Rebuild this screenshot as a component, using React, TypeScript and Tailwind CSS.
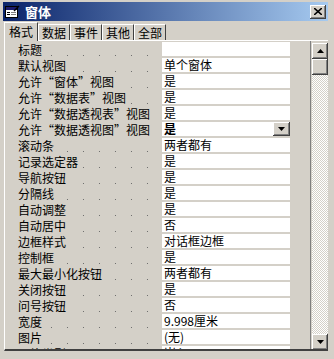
import React from "react";

const rows: [string, string, boolean?][] = [
  ["标题", ""],
  ["默认视图", "单个窗体"],
  ["允许“窗体”视图", "是"],
  ["允许“数据表”视图", "是"],
  ["允许“数据透视表”视图", "是"],
  ["允许“数据透视图”视图", "是", true],
  ["滚动条", "两者都有"],
  ["记录选定器", "是"],
  ["导航按钮", "是"],
  ["分隔线", "是"],
  ["自动调整", "是"],
  ["自动居中", "否"],
  ["边框样式", "对话框边框"],
  ["控制框", "是"],
  ["最大最小化按钮", "两者都有"],
  ["关闭按钮", "是"],
  ["问号按钮", "否"],
  ["宽度", "9.998厘米"],
  ["图片", "(无)"],
  ["图片类型", "嵌入"],
];

const raised =
  "bg-[#d4d0c8] shadow-[inset_-1px_-1px_#404040,inset_1px_1px_#ffffff,inset_-2px_-2px_#808080,inset_2px_2px_#d4d0c8]";

function Tri({ up }: { up?: boolean }) {
  return (
    <svg width="7" height="4" viewBox="0 0 7 4" className="block">
      {up ? (
        <path d="M3.5 0 L7 4 L0 4 Z" fill="#000" />
      ) : (
        <path d="M0 0 L7 0 L3.5 4 Z" fill="#000" />
      )}
    </svg>
  );
}

export default function App() {
  return (
    <div
      className="w-[334px] h-[359px] bg-[#d4d0c8] overflow-hidden flex flex-col pl-[3px] pr-[6px] pt-[2px] text-[12px] text-black"
      style={{ fontFamily: '"Noto Sans CJK SC", "Liberation Sans", sans-serif' }}
    >
      {/* title bar */}
      <div className="h-[19px] shrink-0 flex items-center bg-[linear-gradient(90deg,#0a246a,#a6caf0)] pl-[2px] pr-[2px]">
        <svg width="15" height="13" viewBox="0 0 15 13" className="block">
          <rect x="0.5" y="1.5" width="12" height="11" fill="#fff" stroke="#000" />
          <rect x="1" y="2" width="11" height="3" fill="#1c1c6c" />
          <rect x="2" y="7" width="3" height="1" fill="#000" />
          <rect x="6" y="7" width="5" height="1" fill="#808080" />
          <rect x="2" y="9" width="3" height="1" fill="#000" />
          <rect x="6" y="9" width="5" height="1" fill="#808080" />
          <path d="M9 6 L14 1" stroke="#000" strokeWidth="1.5" />
        </svg>
        <span className="ml-[5px] text-white font-bold text-[13px] leading-none">窗体</span>
        <div className="flex-1" />
        <div className={`w-[16px] h-[14px] flex items-center justify-center ${raised}`}>
          <svg width="8" height="7" viewBox="0 0 8 7" className="block">
            <path d="M0 0 L8 7 M8 0 L0 7" stroke="#000" strokeWidth="1.6" />
          </svg>
        </div>
      </div>

      {/* tabs */}
      <div className="h-[19px] shrink-0 flex items-end pl-[1px]">
        <div className="h-[19px] px-[4px] flex items-center border-t border-l border-white border-r border-r-[#404040] bg-[#d4d0c8] relative z-10 mb-[-1px] leading-[14px]">
          格式
        </div>
        {["数据", "事件", "其他", "全部"].map((t) => (
          <div
            key={t}
            className="h-[16px] px-[3px] flex items-center border-t border-l border-white border-r border-r-[#404040] leading-[14px]"
          >
            {t}
          </div>
        ))}
      </div>

      {/* panel */}
      <div className="h-[311px] shrink-0 flex border-t border-l border-white ml-[1px] border-b-2 border-b-[#404040]">
        <div className="w-[287px] flex flex-col pt-[1px] overflow-hidden h-[308px]">
          {rows.map(([label, value, dd], i) => (
            <div key={i} className="h-[16px] shrink-0 flex">
              <div className="w-[157px] flex pl-[13px] pr-[7px] leading-[16px] whitespace-nowrap">
                <span>{label}</span>
                <div className="flex-1 ml-[3px] bg-[radial-gradient(circle_at_8.5px_13.5px,#6e6e6e_0.75px,transparent_1px)] bg-[length:16px_16px] bg-right bg-repeat-x" />
              </div>
              <div className="w-[128px] h-[14px] bg-white flex items-center pl-[2px] leading-[14px] whitespace-nowrap">
                <span className={dd ? "font-bold" : ""}>{value}</span>
                {dd && (
                  <div className={`ml-auto w-[17px] h-[14px] flex items-center justify-center ${raised}`}>
                    <Tri />
                  </div>
                )}
              </div>
            </div>
          ))}
        </div>
        <div className="w-[18px]" />
        <div className="w-[1px] h-[308px] bg-[#808080]" />
        <div className="w-[1px]" />
        {/* scrollbar */}
        <div className="w-[16px] h-[307px] mt-[2px] flex flex-col">
          <div className={`h-[16px] shrink-0 flex items-center justify-center ${raised}`}>
            <Tri up />
          </div>
          <div className={`h-[16px] shrink-0 ${raised}`} />
          <div className="flex-1 bg-[conic-gradient(#d4d0c8_25%,#ffffff_0_50%,#d4d0c8_0_75%,#ffffff_0)] bg-[length:2px_2px]" />
          <div className={`h-[16px] shrink-0 flex items-center justify-center ${raised}`}>
            <Tri />
          </div>
        </div>
      </div>
    </div>
  );
}
